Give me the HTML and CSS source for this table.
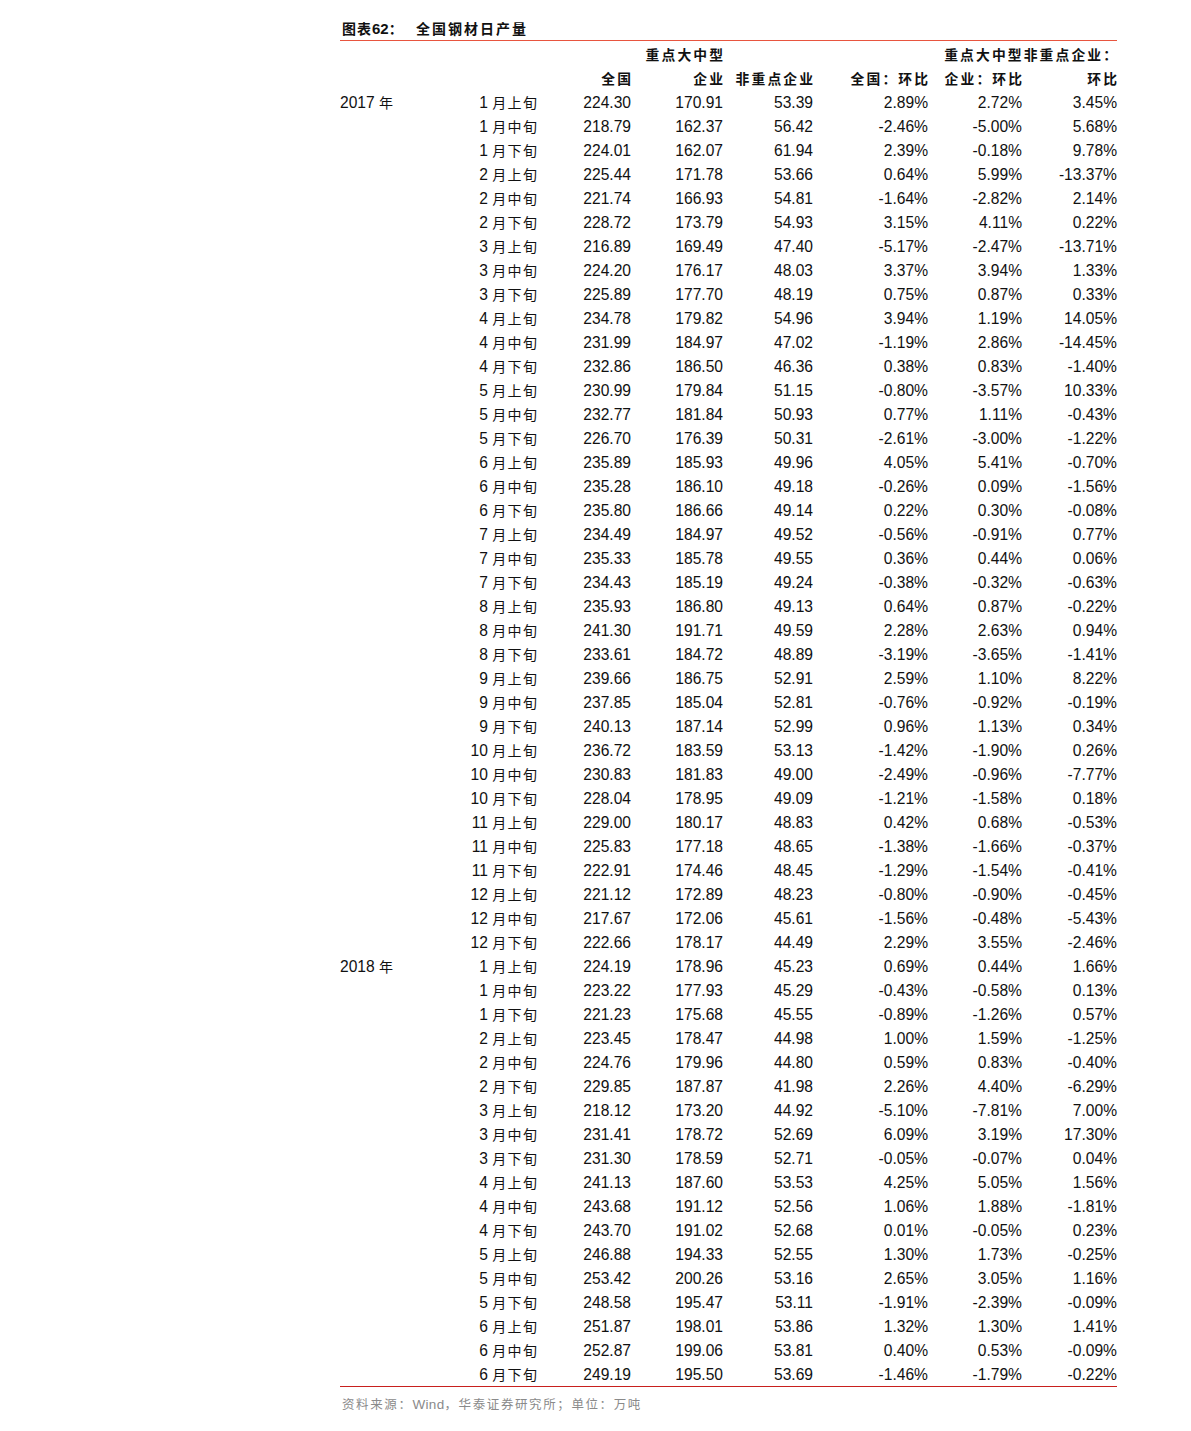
FILE: index.html
```html
<!DOCTYPE html>
<html lang="zh">
<head>
<meta charset="utf-8">
<link rel="stylesheet" href="styles.css">
</head>
<body>
<div class="page">
  <div class="title"><span class="t-label">图表<b class="num">62</b>：</span><span class="t-name">全国钢材日产量</span></div>
  <table class="data">
    <colgroup>
      <col class="c1"><col class="c2"><col class="c3"><col class="c4"><col class="c5"><col class="c6"><col class="c7"><col class="c8">
    </colgroup>
    <thead>
      <tr>
        <th></th><th></th><th></th><th><span class="hz">重点大中型</span></th><th></th><th></th><th colspan="2"><span class="hz">重点大中型非重点企业：</span></th>
      </tr>
      <tr>
        <th></th><th></th><th><span class="hz">全国</span></th><th><span class="hz">企业</span></th><th><span class="hz">非重点企业</span></th><th><span class="hz">全国：环比</span></th><th><span class="hz">企业：环比</span></th><th><span class="hz">环比</span></th>
      </tr>
    </thead>
    <tbody>
      <tr><td class="yr">2017 <span class="cn">年</span></td><td>1 <span class="cn">月上旬</span></td><td>224.30</td><td>170.91</td><td>53.39</td><td>2.89%</td><td>2.72%</td><td>3.45%</td></tr>
      <tr><td></td><td>1 <span class="cn">月中旬</span></td><td>218.79</td><td>162.37</td><td>56.42</td><td>-2.46%</td><td>-5.00%</td><td>5.68%</td></tr>
      <tr><td></td><td>1 <span class="cn">月下旬</span></td><td>224.01</td><td>162.07</td><td>61.94</td><td>2.39%</td><td>-0.18%</td><td>9.78%</td></tr>
      <tr><td></td><td>2 <span class="cn">月上旬</span></td><td>225.44</td><td>171.78</td><td>53.66</td><td>0.64%</td><td>5.99%</td><td>-13.37%</td></tr>
      <tr><td></td><td>2 <span class="cn">月中旬</span></td><td>221.74</td><td>166.93</td><td>54.81</td><td>-1.64%</td><td>-2.82%</td><td>2.14%</td></tr>
      <tr><td></td><td>2 <span class="cn">月下旬</span></td><td>228.72</td><td>173.79</td><td>54.93</td><td>3.15%</td><td>4.11%</td><td>0.22%</td></tr>
      <tr><td></td><td>3 <span class="cn">月上旬</span></td><td>216.89</td><td>169.49</td><td>47.40</td><td>-5.17%</td><td>-2.47%</td><td>-13.71%</td></tr>
      <tr><td></td><td>3 <span class="cn">月中旬</span></td><td>224.20</td><td>176.17</td><td>48.03</td><td>3.37%</td><td>3.94%</td><td>1.33%</td></tr>
      <tr><td></td><td>3 <span class="cn">月下旬</span></td><td>225.89</td><td>177.70</td><td>48.19</td><td>0.75%</td><td>0.87%</td><td>0.33%</td></tr>
      <tr><td></td><td>4 <span class="cn">月上旬</span></td><td>234.78</td><td>179.82</td><td>54.96</td><td>3.94%</td><td>1.19%</td><td>14.05%</td></tr>
      <tr><td></td><td>4 <span class="cn">月中旬</span></td><td>231.99</td><td>184.97</td><td>47.02</td><td>-1.19%</td><td>2.86%</td><td>-14.45%</td></tr>
      <tr><td></td><td>4 <span class="cn">月下旬</span></td><td>232.86</td><td>186.50</td><td>46.36</td><td>0.38%</td><td>0.83%</td><td>-1.40%</td></tr>
      <tr><td></td><td>5 <span class="cn">月上旬</span></td><td>230.99</td><td>179.84</td><td>51.15</td><td>-0.80%</td><td>-3.57%</td><td>10.33%</td></tr>
      <tr><td></td><td>5 <span class="cn">月中旬</span></td><td>232.77</td><td>181.84</td><td>50.93</td><td>0.77%</td><td>1.11%</td><td>-0.43%</td></tr>
      <tr><td></td><td>5 <span class="cn">月下旬</span></td><td>226.70</td><td>176.39</td><td>50.31</td><td>-2.61%</td><td>-3.00%</td><td>-1.22%</td></tr>
      <tr><td></td><td>6 <span class="cn">月上旬</span></td><td>235.89</td><td>185.93</td><td>49.96</td><td>4.05%</td><td>5.41%</td><td>-0.70%</td></tr>
      <tr><td></td><td>6 <span class="cn">月中旬</span></td><td>235.28</td><td>186.10</td><td>49.18</td><td>-0.26%</td><td>0.09%</td><td>-1.56%</td></tr>
      <tr><td></td><td>6 <span class="cn">月下旬</span></td><td>235.80</td><td>186.66</td><td>49.14</td><td>0.22%</td><td>0.30%</td><td>-0.08%</td></tr>
      <tr><td></td><td>7 <span class="cn">月上旬</span></td><td>234.49</td><td>184.97</td><td>49.52</td><td>-0.56%</td><td>-0.91%</td><td>0.77%</td></tr>
      <tr><td></td><td>7 <span class="cn">月中旬</span></td><td>235.33</td><td>185.78</td><td>49.55</td><td>0.36%</td><td>0.44%</td><td>0.06%</td></tr>
      <tr><td></td><td>7 <span class="cn">月下旬</span></td><td>234.43</td><td>185.19</td><td>49.24</td><td>-0.38%</td><td>-0.32%</td><td>-0.63%</td></tr>
      <tr><td></td><td>8 <span class="cn">月上旬</span></td><td>235.93</td><td>186.80</td><td>49.13</td><td>0.64%</td><td>0.87%</td><td>-0.22%</td></tr>
      <tr><td></td><td>8 <span class="cn">月中旬</span></td><td>241.30</td><td>191.71</td><td>49.59</td><td>2.28%</td><td>2.63%</td><td>0.94%</td></tr>
      <tr><td></td><td>8 <span class="cn">月下旬</span></td><td>233.61</td><td>184.72</td><td>48.89</td><td>-3.19%</td><td>-3.65%</td><td>-1.41%</td></tr>
      <tr><td></td><td>9 <span class="cn">月上旬</span></td><td>239.66</td><td>186.75</td><td>52.91</td><td>2.59%</td><td>1.10%</td><td>8.22%</td></tr>
      <tr><td></td><td>9 <span class="cn">月中旬</span></td><td>237.85</td><td>185.04</td><td>52.81</td><td>-0.76%</td><td>-0.92%</td><td>-0.19%</td></tr>
      <tr><td></td><td>9 <span class="cn">月下旬</span></td><td>240.13</td><td>187.14</td><td>52.99</td><td>0.96%</td><td>1.13%</td><td>0.34%</td></tr>
      <tr><td></td><td>10 <span class="cn">月上旬</span></td><td>236.72</td><td>183.59</td><td>53.13</td><td>-1.42%</td><td>-1.90%</td><td>0.26%</td></tr>
      <tr><td></td><td>10 <span class="cn">月中旬</span></td><td>230.83</td><td>181.83</td><td>49.00</td><td>-2.49%</td><td>-0.96%</td><td>-7.77%</td></tr>
      <tr><td></td><td>10 <span class="cn">月下旬</span></td><td>228.04</td><td>178.95</td><td>49.09</td><td>-1.21%</td><td>-1.58%</td><td>0.18%</td></tr>
      <tr><td></td><td>11 <span class="cn">月上旬</span></td><td>229.00</td><td>180.17</td><td>48.83</td><td>0.42%</td><td>0.68%</td><td>-0.53%</td></tr>
      <tr><td></td><td>11 <span class="cn">月中旬</span></td><td>225.83</td><td>177.18</td><td>48.65</td><td>-1.38%</td><td>-1.66%</td><td>-0.37%</td></tr>
      <tr><td></td><td>11 <span class="cn">月下旬</span></td><td>222.91</td><td>174.46</td><td>48.45</td><td>-1.29%</td><td>-1.54%</td><td>-0.41%</td></tr>
      <tr><td></td><td>12 <span class="cn">月上旬</span></td><td>221.12</td><td>172.89</td><td>48.23</td><td>-0.80%</td><td>-0.90%</td><td>-0.45%</td></tr>
      <tr><td></td><td>12 <span class="cn">月中旬</span></td><td>217.67</td><td>172.06</td><td>45.61</td><td>-1.56%</td><td>-0.48%</td><td>-5.43%</td></tr>
      <tr><td></td><td>12 <span class="cn">月下旬</span></td><td>222.66</td><td>178.17</td><td>44.49</td><td>2.29%</td><td>3.55%</td><td>-2.46%</td></tr>
      <tr><td class="yr">2018 <span class="cn">年</span></td><td>1 <span class="cn">月上旬</span></td><td>224.19</td><td>178.96</td><td>45.23</td><td>0.69%</td><td>0.44%</td><td>1.66%</td></tr>
      <tr><td></td><td>1 <span class="cn">月中旬</span></td><td>223.22</td><td>177.93</td><td>45.29</td><td>-0.43%</td><td>-0.58%</td><td>0.13%</td></tr>
      <tr><td></td><td>1 <span class="cn">月下旬</span></td><td>221.23</td><td>175.68</td><td>45.55</td><td>-0.89%</td><td>-1.26%</td><td>0.57%</td></tr>
      <tr><td></td><td>2 <span class="cn">月上旬</span></td><td>223.45</td><td>178.47</td><td>44.98</td><td>1.00%</td><td>1.59%</td><td>-1.25%</td></tr>
      <tr><td></td><td>2 <span class="cn">月中旬</span></td><td>224.76</td><td>179.96</td><td>44.80</td><td>0.59%</td><td>0.83%</td><td>-0.40%</td></tr>
      <tr><td></td><td>2 <span class="cn">月下旬</span></td><td>229.85</td><td>187.87</td><td>41.98</td><td>2.26%</td><td>4.40%</td><td>-6.29%</td></tr>
      <tr><td></td><td>3 <span class="cn">月上旬</span></td><td>218.12</td><td>173.20</td><td>44.92</td><td>-5.10%</td><td>-7.81%</td><td>7.00%</td></tr>
      <tr><td></td><td>3 <span class="cn">月中旬</span></td><td>231.41</td><td>178.72</td><td>52.69</td><td>6.09%</td><td>3.19%</td><td>17.30%</td></tr>
      <tr><td></td><td>3 <span class="cn">月下旬</span></td><td>231.30</td><td>178.59</td><td>52.71</td><td>-0.05%</td><td>-0.07%</td><td>0.04%</td></tr>
      <tr><td></td><td>4 <span class="cn">月上旬</span></td><td>241.13</td><td>187.60</td><td>53.53</td><td>4.25%</td><td>5.05%</td><td>1.56%</td></tr>
      <tr><td></td><td>4 <span class="cn">月中旬</span></td><td>243.68</td><td>191.12</td><td>52.56</td><td>1.06%</td><td>1.88%</td><td>-1.81%</td></tr>
      <tr><td></td><td>4 <span class="cn">月下旬</span></td><td>243.70</td><td>191.02</td><td>52.68</td><td>0.01%</td><td>-0.05%</td><td>0.23%</td></tr>
      <tr><td></td><td>5 <span class="cn">月上旬</span></td><td>246.88</td><td>194.33</td><td>52.55</td><td>1.30%</td><td>1.73%</td><td>-0.25%</td></tr>
      <tr><td></td><td>5 <span class="cn">月中旬</span></td><td>253.42</td><td>200.26</td><td>53.16</td><td>2.65%</td><td>3.05%</td><td>1.16%</td></tr>
      <tr><td></td><td>5 <span class="cn">月下旬</span></td><td>248.58</td><td>195.47</td><td>53.11</td><td>-1.91%</td><td>-2.39%</td><td>-0.09%</td></tr>
      <tr><td></td><td>6 <span class="cn">月上旬</span></td><td>251.87</td><td>198.01</td><td>53.86</td><td>1.32%</td><td>1.30%</td><td>1.41%</td></tr>
      <tr><td></td><td>6 <span class="cn">月中旬</span></td><td>252.87</td><td>199.06</td><td>53.81</td><td>0.40%</td><td>0.53%</td><td>-0.09%</td></tr>
      <tr><td></td><td>6 <span class="cn">月下旬</span></td><td>249.19</td><td>195.50</td><td>53.69</td><td>-1.46%</td><td>-1.79%</td><td>-0.22%</td></tr>
    </tbody>
  </table>
  <div class="source">资料来源：<span class="lat">Wind</span>，华泰证券研究所；单位：万吨</div>
</div>
</body>
</html>
```
FILE: styles.css
```css
html, body {
  margin: 0;
  padding: 0;
  background: #ffffff;
}
body {
  font-family: "Liberation Sans", "Noto Sans CJK SC", sans-serif;
  color: #111;
}
.page {
  margin-left: 340px;
  width: 777px;
  padding-top: 16px;
}
.title {
  height: 24px;
  line-height: 24px;
  font-family: "Noto Sans CJK SC", sans-serif;
  font-weight: 700;
  font-size: 14px;
  letter-spacing: 1px;
  padding-left: 2px;
  border-bottom: 1px solid #e8553f;
  display: flex;
}
.title .num {
  font-family: "Liberation Sans", sans-serif;
  font-size: 15px;
  letter-spacing: 0;
}
.t-label {
  width: 74px;
}
.t-name {
  letter-spacing: 2px;
}
table.data {
  margin-top: 1px;
  border-collapse: collapse;
  table-layout: fixed;
  width: 777px;
  border-bottom: 1px solid #c8201e;
}
col.c1 { width: 100px; }
col.c2 { width: 97px; }
col.c3 { width: 94px; }
col.c4 { width: 92px; }
col.c5 { width: 90px; }
col.c6 { width: 115px; }
col.c7 { width: 94px; }
col.c8 { width: 95px; }
th, td {
  box-sizing: border-box;
  height: 24px;
  padding: 0;
  text-align: right;
  white-space: nowrap;
  font-size: 15.6px;
  line-height: 24px;
  vertical-align: middle;
}
td {
  padding-top: 1px;
  line-height: 23px;
}
th {
  font-family: "Noto Sans CJK SC", sans-serif;
  font-weight: 700;
  font-size: 13.8px;
}
.hz {
  letter-spacing: 2.1px;
  margin-right: -2.1px;
}
td.yr {
  text-align: left;
}
.cn {
  font-family: "Noto Sans CJK SC", sans-serif;
  font-size: 14px;
  line-height: 16px;
  letter-spacing: 1.4px;
  margin-right: -1.4px;
}
.source {
  margin-top: 7px;
  height: 20px;
  line-height: 20px;
  font-family: "Noto Sans CJK SC", sans-serif;
  font-size: 12.5px;
  color: #8a8a8a;
  letter-spacing: 1.6px;
  padding-left: 2px;
}
.source .lat {
  font-family: "Liberation Sans", sans-serif;
  font-size: 13.5px;
  letter-spacing: 0.3px;
}
```
